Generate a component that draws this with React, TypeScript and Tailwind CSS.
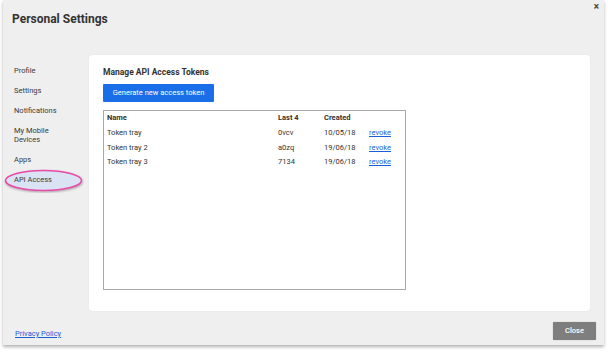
import React from "react";

interface Token {
  name: string;
  last4: string;
  created: string;
}

const tokens: Token[] = [
  { name: "Token tray", last4: "0vcv", created: "10/05/18" },
  { name: "Token tray 2", last4: "a0zq", created: "19/06/18" },
  { name: "Token tray 3", last4: "7134", created: "19/06/18" },
];

const navItems = ["Profile", "Settings", "Notifications", "My Mobile Devices", "Apps"];

const HighlightEllipse: React.FC = () => (
  <svg
    className="absolute left-[-10px] top-[-6px]"
    width="80"
    height="24"
    viewBox="0 0 80 24"
  >
    <defs>
      <filter id="sh" x="-10%" y="-30%" width="120%" height="160%">
        <feDropShadow dx="0.5" dy="1" stdDeviation="0.8" floodColor="#000" floodOpacity="0.35" />
      </filter>
    </defs>
    <ellipse cx="39.5" cy="11.5" rx="38" ry="10" fill="#d9e3f3" stroke="#e84aa8" strokeWidth="1.6" filter="url(#sh)" />
  </svg>
);

const App: React.FC = () => {
  return (
    <div className="w-[608px] h-[354px] bg-white font-['Roboto',sans-serif] text-[#333]">
      <div className="relative ml-[3px] w-[601px] h-[345px] bg-[#efefef] shadow-[0_2px_3px_rgba(0,0,0,0.3)] flex flex-col">
        <button className="absolute right-[5px] top-[2px] text-[10px] font-bold leading-[10px] text-[#444]">×</button>

        <div className="h-[55px] pl-[9px] pt-[12px]">
          <h1 className="text-[12px] font-bold leading-[15px]">Personal Settings</h1>
        </div>

        <div className="flex">
          <nav className="w-[86px] pl-[11px] pt-[11px] flex flex-col gap-[11px] text-[7.5px] leading-[9px] text-[#3a3a3a]">
            {navItems.map((item) => (
              <div key={item} className={item === "My Mobile Devices" ? "w-[45px]" : ""}>
                {item}
              </div>
            ))}
            <div className="relative">
              <HighlightEllipse />
              <span className="relative">API Access</span>
            </div>
          </nav>

          <div className="w-[501px] h-[256px] bg-white rounded-[3px] shadow-[0_0_1px_rgba(0,0,0,0.15)] pl-[14px] pt-[12px]">
            <h2 className="text-[8.5px] font-bold leading-[10px]">Manage API Access Tokens</h2>
            <button className="mt-[7px] w-[111px] h-[18px] bg-[#1a6ee8] text-white text-[7.5px] rounded-[1px]">
              Generate new access token
            </button>
            <div className="mt-[8px] w-[303px] h-[180px] border border-[#a9a9a9] text-[7.5px]">
              <div className="grid grid-cols-[171px_46px_45px_auto] pl-[3px] leading-[14px]">
                <div className="font-bold">Name</div>
                <div className="font-bold">Last 4</div>
                <div className="font-bold">Created</div>
                <div />
              </div>
              <div className="mt-[1px] grid grid-cols-[171px_46px_45px_auto] pl-[3px] leading-[14.3px]">
                {tokens.map((t) => (
                  <React.Fragment key={t.name}>
                    <div>{t.name}</div>
                    <div>{t.last4}</div>
                    <div>{t.created}</div>
                    <a href="#" className="text-[#1a5fd6] underline">revoke</a>
                  </React.Fragment>
                ))}
              </div>
            </div>
          </div>
        </div>

        <div className="flex-1 flex justify-between pl-[12px] pr-[8px]">
          <a href="#" className="mt-[18px] text-[7.5px] leading-[9px] text-[#1a5fd6] underline">Privacy Policy</a>
          <button className="mt-[11px] w-[43px] h-[18px] bg-[#7e7e7e] text-white text-[7.5px] font-medium rounded-[1px] shadow-[0_0_1px_rgba(0,0,0,0.4)]">
            Close
          </button>
        </div>
      </div>
    </div>
  );
};

export default App;
